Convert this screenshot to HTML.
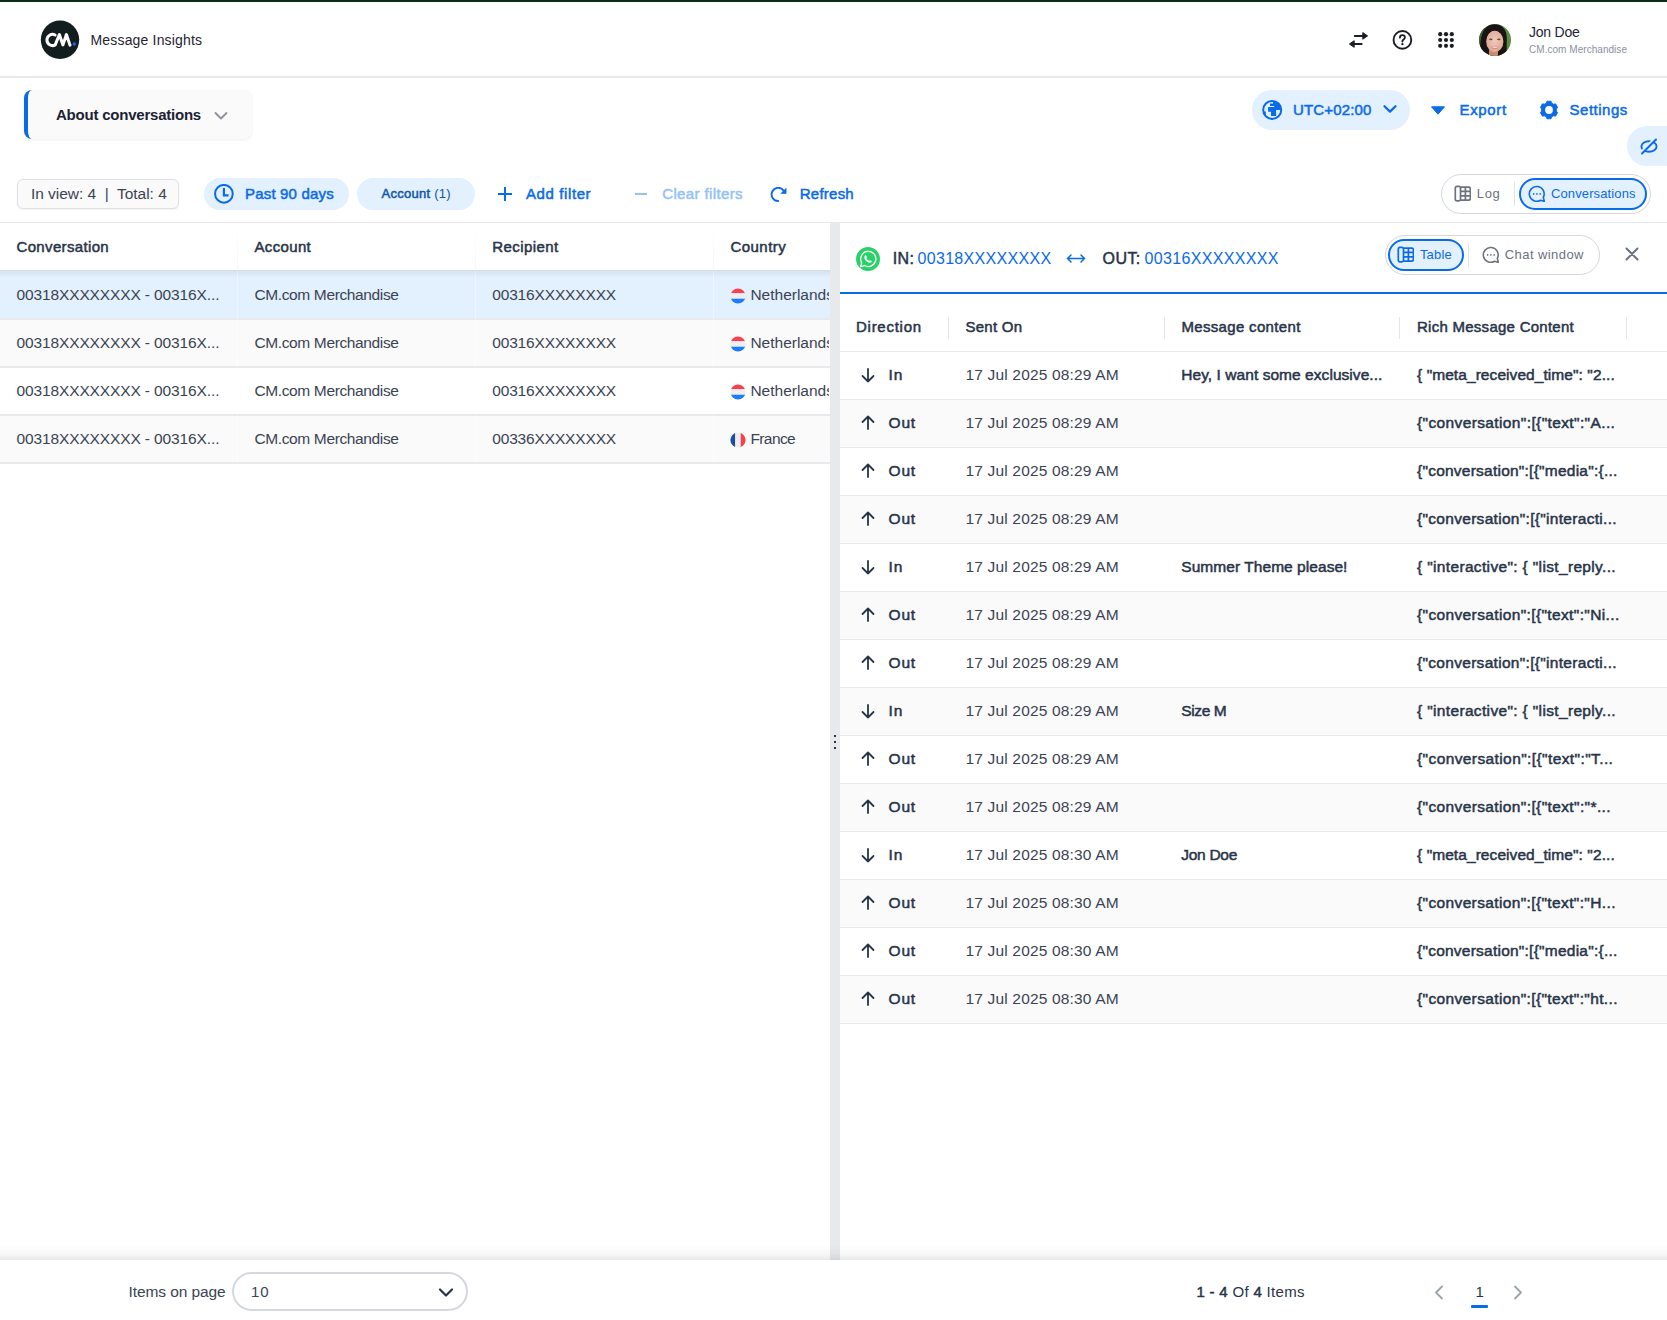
<!DOCTYPE html>
<html><head><meta charset="utf-8"><title>Message Insights</title>
<style>
html,body{margin:0;padding:0;}
body{width:1667px;height:1320px;position:relative;overflow:hidden;background:#fff;font-family:"Liberation Sans", sans-serif;}
.t{position:absolute;white-space:nowrap;}
.r{position:absolute;}
.sb{-webkit-text-stroke:0.5px currentColor;}
</style></head><body>
<div class="r" style="left:0px;top:0px;width:1667px;height:2px;background:#0b2e1b;"></div>
<svg class="r" style="left:40px;top:20px;" width="40" height="40" viewBox="0 0 40 40"><circle cx="20" cy="19.8" r="19.2" fill="#121e1e"/><path d="M15.1 15 A5.6 5.6 0 1 0 15.2 24.9 L19.4 14.6 L22.9 24.9 L26.4 14.6 L30 25.2" fill="none" stroke="#fff" stroke-width="3" stroke-linecap="round" stroke-linejoin="round"/><circle cx="34.3" cy="24" r="1.7" fill="#1f5cff"/></svg>
<div class="t " style="left:90.5px;top:31.45px;font-size:14px;line-height:18px;color:#1f2433;letter-spacing:0.173px;">Message Insights</div>
<svg class="r" style="left:1348px;top:31px;" width="21" height="18" viewBox="0 0 21 18"><path d="M6.8 4.9 H15.5" stroke="#1b1f24" stroke-width="2" fill="none" stroke-linecap="round"/><path d="M14.8 1.6 L19.6 4.9 L14.8 8.2 Z" fill="#1b1f24" stroke="#1b1f24" stroke-width="1" stroke-linejoin="round"/><path d="M13.6 13 H5.5" stroke="#1b1f24" stroke-width="2" fill="none" stroke-linecap="round"/><path d="M6.2 9.7 L1.4 13 L6.2 16.3 Z" fill="#1b1f24" stroke="#1b1f24" stroke-width="1" stroke-linejoin="round"/></svg>
<svg class="r" style="left:1391px;top:29px;" width="22" height="22" viewBox="0 0 22 22"><circle cx="11.4" cy="10.9" r="8.85" stroke="#1b1f24" stroke-width="1.9" fill="none"/><path d="M8.9 8.7 C8.9 7.2 10 6.2 11.4 6.2 C12.9 6.2 13.9 7.2 13.9 8.5 C13.9 10 12.3 10.4 11.6 11.5 L11.4 12.7" stroke="#1b1f24" stroke-width="1.8" fill="none" stroke-linecap="round"/><circle cx="11.4" cy="15.2" r="1.15" fill="#1b1f24"/></svg>
<svg class="r" style="left:1438px;top:32px;" width="16" height="16" viewBox="0 0 16 16"><circle cx="2.2" cy="2.2" r="2.1" fill="#1b1f24"/><circle cx="2.2" cy="8.0" r="2.1" fill="#1b1f24"/><circle cx="2.2" cy="13.8" r="2.1" fill="#1b1f24"/><circle cx="8.0" cy="2.2" r="2.1" fill="#1b1f24"/><circle cx="8.0" cy="8.0" r="2.1" fill="#1b1f24"/><circle cx="8.0" cy="13.8" r="2.1" fill="#1b1f24"/><circle cx="13.8" cy="2.2" r="2.1" fill="#1b1f24"/><circle cx="13.8" cy="8.0" r="2.1" fill="#1b1f24"/><circle cx="13.8" cy="13.8" r="2.1" fill="#1b1f24"/></svg>
<svg class="r" style="left:1479px;top:24px;" width="32" height="32" viewBox="0 0 32 32"><defs><clipPath id="av"><circle cx="16" cy="16" r="16"/></clipPath><radialGradient id="fg" cx="0.5" cy="0.45" r="0.6"><stop offset="0" stop-color="#f0c9bb"/><stop offset="1" stop-color="#dca58f"/></radialGradient></defs><g clip-path="url(#av)"><rect width="32" height="32" fill="#5d8a43"/><rect x="0" y="0" width="6" height="32" fill="#3f5f30"/><path d="M1.5 32 C0.5 18 2 0.2 15 0.2 C25.5 0.2 28.3 8 27.8 16 C27.4 24 28.5 30 26.5 32 Z" fill="#1a1315"/><rect x="10" y="25" width="9" height="8" fill="#c98b70"/><ellipse cx="15.8" cy="17.4" rx="8.6" ry="10.9" fill="url(#fg)"/><path d="M6.8 14.5 C7.2 6 12 4.6 15.6 4.8 C20.5 5 24.2 8 24.8 14.5 C23 8.8 18.5 6.4 15.6 6.4 C12.2 6.6 8.5 8.8 6.8 14.5Z" fill="#1a1315"/><ellipse cx="11.8" cy="15.3" rx="1.7" ry="0.85" fill="#6b4540"/><ellipse cx="19.8" cy="15.3" rx="1.7" ry="0.85" fill="#6b4540"/><ellipse cx="15.9" cy="23.5" rx="3.6" ry="1.6" fill="#d98d90"/><ellipse cx="15.9" cy="23.3" rx="2.6" ry="0.8" fill="#f4dcdc"/></g></svg>
<div class="t " style="left:1529px;top:23.45px;font-size:14px;line-height:18px;color:#1f2433;letter-spacing:-0.233px;">Jon Doe</div>
<div class="t " style="left:1529px;top:43.33px;font-size:10px;line-height:13px;color:#8a919e;letter-spacing:0.041px;">CM.com Merchandise</div>
<div class="r" style="left:0px;top:76px;width:1667px;height:2px;background:#e8e9ed;"></div>
<div class="r" style="left:24px;top:90px;width:228px;height:49px;background:#fafafa;border-radius:8px;box-shadow:0 1px 3px rgba(0,0,0,0.07);"></div>
<div class="r" style="left:24px;top:90px;width:10px;height:49px;border-left:4px solid #0a6be8;border-radius:8px 0 0 8px;box-sizing:border-box;"></div>
<div class="t " style="left:56px;top:105.10px;font-size:15px;line-height:20px;font-weight:700;color:#1b2233;letter-spacing:-0.222px;">About conversations</div>
<svg class="r" style="left:214px;top:111px;" width="14" height="10" viewBox="0 0 14 10"><path d="M1.5 2 L7 7.5 L12.5 2" stroke="#8a8f99" stroke-width="1.8" fill="none" stroke-linecap="round" stroke-linejoin="round"/></svg>
<div class="r" style="left:1252px;top:90px;width:158px;height:40px;background:#e3f0fd;border-radius:20px;"></div>
<svg class="r" style="left:1261px;top:99px;" width="22" height="22" viewBox="0 0 22 22"><defs><clipPath id="gl"><circle cx="11.2" cy="10.9" r="9"/></clipPath></defs><g clip-path="url(#gl)"><path d="M12 1 H22 V10.9 H15.1 V16.9 H10 V12.8 H7.1 V8 H13.2 V7 H9 V4.6 H12 Z" fill="#0a6be8"/><path d="M1 12.4 H4.8 V16 H1 Z" fill="#0a6be8"/></g><circle cx="11.2" cy="10.9" r="9" stroke="#0a6be8" stroke-width="2" fill="none"/></svg>
<div class="t " style="left:1292.9px;top:100.10px;font-size:15px;line-height:20px;-webkit-text-stroke:0.5px #0a6be8;color:#0a6be8;letter-spacing:0.162px;">UTC+02:00</div>
<svg class="r" style="left:1383px;top:104px;" width="14" height="10" viewBox="0 0 14 10"><path d="M1.5 2.2 L7 7.6 L12.5 2.2" stroke="#0a6be8" stroke-width="2.2" fill="none" stroke-linecap="round" stroke-linejoin="round"/></svg>
<svg class="r" style="left:1431px;top:106px;" width="14" height="9" viewBox="0 0 14 9"><path d="M0.5 0.8 H13.5 L7 8.2 Z" fill="#0a6be8" stroke="#0a6be8" stroke-width="1" stroke-linejoin="round"/></svg>
<div class="t " style="left:1459.5px;top:100.10px;font-size:15px;line-height:20px;-webkit-text-stroke:0.5px #0a6be8;color:#0a6be8;letter-spacing:0.660px;">Export</div>
<svg class="r" style="left:1539px;top:100px;" width="20" height="20" viewBox="0 0 20 20"><path d="M7.23,3.14 L7.98,1.23 L12.02,1.23 L12.77,3.14 L14.56,4.17 L16.58,3.86 L18.61,7.37 L17.33,8.97 L17.33,11.03 L18.61,12.63 L16.58,16.14 L14.56,15.83 L12.77,16.86 L12.02,18.77 L7.98,18.77 L7.23,16.86 L5.44,15.83 L3.42,16.14 L1.39,12.63 L2.67,11.03 L2.67,8.97 L1.39,7.37 L3.42,3.86 L5.44,4.17Z" fill="#0a6be8" stroke="#0a6be8" stroke-width="0.9" stroke-linejoin="round"/><circle cx="10" cy="10" r="3.9" fill="#fff"/></svg>
<div class="t " style="left:1569.6px;top:100.10px;font-size:15px;line-height:20px;-webkit-text-stroke:0.5px #0a6be8;color:#0a6be8;letter-spacing:0.500px;">Settings</div>
<div class="r" style="left:1627px;top:126px;width:60px;height:40px;background:#e3f0fd;border-radius:20px;"></div>
<svg class="r" style="left:1640px;top:138px;" width="18" height="17" viewBox="0 0 18 17"><ellipse cx="9" cy="8.5" rx="7.6" ry="5.2" stroke="#0a6be8" stroke-width="1.9" fill="none"/><path d="M0.9 14.4 L14.9 0.4" stroke="#e3f0fd" stroke-width="2.6" stroke-linecap="butt"/><path d="M2 15.5 L16 1.5" stroke="#0a6be8" stroke-width="2" stroke-linecap="round"/></svg>
<div class="r" style="left:17px;top:179px;width:162px;height:30px;background:#fafafa;border:1px solid #dfe1e6;border-radius:6px;box-sizing:border-box;box-shadow:0 1px 2px rgba(0,0,0,0.06);"></div>
<div class="t " style="left:30.9px;top:183.93px;font-size:15.5px;line-height:20px;color:#3a4354;letter-spacing:-0.023px;">In view: 4&nbsp; |&nbsp; Total: 4</div>
<div class="r" style="left:204px;top:178px;width:145px;height:32px;background:#e3f0fd;border-radius:16px;"></div>
<svg class="r" style="left:213px;top:184px;" width="22" height="22" viewBox="0 0 22 22"><circle cx="10.9" cy="9.8" r="8.85" stroke="#0a6be8" stroke-width="2" fill="none"/><path d="M10.9 4 V11.3 H15.6" stroke="#0a6be8" stroke-width="2.2" fill="none" stroke-linejoin="miter"/></svg>
<div class="t " style="left:245px;top:184.10px;font-size:15px;line-height:20px;-webkit-text-stroke:0.5px #0a6be8;color:#0a6be8;letter-spacing:0.182px;">Past 90 days</div>
<div class="r" style="left:357px;top:178px;width:118px;height:32px;background:#e3f0fd;border-radius:16px;"></div>
<div class="t " style="left:381.5px;top:185.30px;font-size:13px;line-height:17px;color:#0f57a8;letter-spacing:0.270px;"><span style="-webkit-text-stroke:0.5px #0f57a8">Account</span> (1)</div>
<svg class="r" style="left:498px;top:187px;" width="14" height="14" viewBox="0 0 14 14"><path d="M7 1 V13 M1 7 H13" stroke="#0a6be8" stroke-width="2" stroke-linecap="square"/></svg>
<div class="t " style="left:526px;top:184.10px;font-size:15px;line-height:20px;-webkit-text-stroke:0.5px #0a6be8;color:#0a6be8;letter-spacing:0.600px;">Add filter</div>
<svg class="r" style="left:634px;top:192px;" width="14" height="4" viewBox="0 0 14 4"><path d="M1 2 H13" stroke="#93c2f7" stroke-width="2"/></svg>
<div class="t " style="left:662.2px;top:184.10px;font-size:15px;line-height:20px;-webkit-text-stroke:0.5px #93c2f7;color:#93c2f7;letter-spacing:0.375px;">Clear filters</div>
<svg class="r" style="left:770px;top:187px;" width="18" height="16" viewBox="0 0 18 16"><path d="M8.2 14 A6.6 6.6 0 1 1 13.4 3.3" stroke="#0a6be8" stroke-width="1.9" fill="none" stroke-linecap="round"/><path d="M16.1 1.2 V6.5 H10.9 Z" fill="#0a6be8" stroke="#0a6be8" stroke-width="0.6" stroke-linejoin="round"/></svg>
<div class="t " style="left:799.8px;top:184.10px;font-size:15px;line-height:20px;-webkit-text-stroke:0.5px #0a6be8;color:#0a6be8;letter-spacing:0.233px;">Refresh</div>
<div class="r" style="left:1441px;top:174px;width:210px;height:40px;border:1px solid #d5d7dc;border-radius:20px;box-sizing:border-box;"></div>
<div class="r" style="left:1514px;top:182px;width:1px;height:24px;background:#e2e4e8;"></div>
<div class="r" style="left:1519px;top:178px;width:128px;height:32px;border:2px solid #0a6be8;background:#e3f0fd;border-radius:16px;box-sizing:border-box;"></div>
<svg class="r" style="left:1454px;top:185px;" width="17" height="17" viewBox="0 0 17 17"><rect x="1.3" y="1.3" width="5.2" height="14.6" rx="1.6" stroke="#6b7280" stroke-width="1.7" fill="none"/><path d="M6.5 2.1 H14.6 Q16.4 2.1 16.4 3.9 V13.3 Q16.4 15.1 14.6 15.1 H6.5 M6.5 6.4 H16.4 M6.5 10.8 H16.4 M11.4 2.1 V15.1" stroke="#6b7280" stroke-width="1.7" fill="none"/></svg>
<div class="t " style="left:1476.8px;top:185.30px;font-size:13px;line-height:17px;color:#6b7280;letter-spacing:0.600px;">Log</div>
<svg class="r" style="left:1528px;top:185px;" width="17" height="17" viewBox="0 0 17 17"><path d="M15.3 12.3 A7.4 7.4 0 1 0 12.6 15.2 L16.3 16.4 Z" stroke="#0a6be8" stroke-width="1.6" fill="none" stroke-linejoin="round"/><circle cx="5.6" cy="8.9" r="0.85" fill="#0a6be8"/><circle cx="8.9" cy="8.9" r="0.85" fill="#0a6be8"/><circle cx="12.2" cy="8.9" r="0.85" fill="#0a6be8"/></svg>
<div class="t " style="left:1551px;top:185.30px;font-size:13px;line-height:17px;color:#0a6be8;letter-spacing:0.117px;">Conversations</div>
<div class="r" style="left:0px;top:222px;width:1667px;height:1px;background:#e8e9ed;"></div>
<div class="r" style="left:0px;top:223px;width:830px;height:48px;background:#fff;"></div>
<div class="r" style="left:0px;top:271px;width:830px;height:48px;background:#e3f0fd;"></div>
<div class="r" style="left:0px;top:319px;width:830px;height:48px;background:#fafafa;"></div>
<div class="r" style="left:0px;top:367px;width:830px;height:48px;background:#fff;"></div>
<div class="r" style="left:0px;top:415px;width:830px;height:48px;background:#fafafa;"></div>
<div class="r" style="left:0px;top:318px;width:830px;height:2px;background:#e8e9ed;"></div>
<div class="r" style="left:0px;top:366px;width:830px;height:2px;background:#e8e9ed;"></div>
<div class="r" style="left:0px;top:414px;width:830px;height:2px;background:#e8e9ed;"></div>
<div class="r" style="left:0px;top:462px;width:830px;height:2px;background:#e8e9ed;"></div>
<div class="r" style="left:0px;top:270px;width:830px;height:1px;background:rgba(0,0,0,0.13);"></div>
<div class="r" style="left:0px;top:271px;width:830px;height:7px;background:linear-gradient(rgba(0,0,0,0.06),rgba(0,0,0,0));"></div>
<div class="r" style="left:237px;top:223px;width:1px;height:47px;background:linear-gradient(rgba(0,0,0,0),rgba(0,0,0,0.035));"></div>
<div class="r" style="left:237px;top:271px;width:1px;height:192px;background:rgba(255,255,255,0.35);"></div>
<div class="r" style="left:475px;top:223px;width:1px;height:47px;background:linear-gradient(rgba(0,0,0,0),rgba(0,0,0,0.035));"></div>
<div class="r" style="left:475px;top:271px;width:1px;height:192px;background:rgba(255,255,255,0.35);"></div>
<div class="r" style="left:713px;top:223px;width:1px;height:47px;background:linear-gradient(rgba(0,0,0,0),rgba(0,0,0,0.035));"></div>
<div class="r" style="left:713px;top:271px;width:1px;height:192px;background:rgba(255,255,255,0.35);"></div>
<div class="t " style="left:16.5px;top:237.10px;font-size:15px;line-height:20px;-webkit-text-stroke:0.5px #283449;color:#283449;letter-spacing:0.345px;">Conversation</div>
<div class="t " style="left:254.4px;top:237.10px;font-size:15px;line-height:20px;-webkit-text-stroke:0.5px #283449;color:#283449;letter-spacing:0.367px;">Account</div>
<div class="t " style="left:492.2px;top:237.10px;font-size:15px;line-height:20px;-webkit-text-stroke:0.5px #283449;color:#283449;letter-spacing:0.438px;">Recipient</div>
<div class="t " style="left:730.5px;top:237.10px;font-size:15px;line-height:20px;-webkit-text-stroke:0.5px #283449;color:#283449;letter-spacing:0.450px;">Country</div>
<div class="t " style="left:16.5px;top:284.93px;font-size:15.5px;line-height:20px;color:#3a4354;letter-spacing:-0.125px;">00318XXXXXXXX - 00316X...</div>
<div class="t " style="left:254.4px;top:284.93px;font-size:15.5px;line-height:20px;color:#3a4354;letter-spacing:-0.365px;">CM.com Merchandise</div>
<div class="t " style="left:492.2px;top:284.93px;font-size:15.5px;line-height:20px;color:#3a4354;letter-spacing:-0.150px;">00316XXXXXXXX</div>
<svg class="r" style="left:730px;top:288px;" width="16" height="16" viewBox="0 0 16 16"><defs><clipPath id="fl0"><circle cx="8" cy="8" r="7.6"/></clipPath></defs><g clip-path="url(#fl0)"><rect width="16" height="5.3" fill="#f9404f"/><rect y="5.3" width="16" height="5.4" fill="#eeeeee"/><rect y="10.7" width="16" height="5.3" fill="#1e7bff"/></g></svg>
<div class="t " style="left:750.4px;top:284.93px;font-size:15.5px;line-height:20px;color:#3a4354;width:79px;overflow:hidden;">Netherlands</div>
<div class="t " style="left:16.5px;top:332.93px;font-size:15.5px;line-height:20px;color:#3a4354;letter-spacing:-0.125px;">00318XXXXXXXX - 00316X...</div>
<div class="t " style="left:254.4px;top:332.93px;font-size:15.5px;line-height:20px;color:#3a4354;letter-spacing:-0.365px;">CM.com Merchandise</div>
<div class="t " style="left:492.2px;top:332.93px;font-size:15.5px;line-height:20px;color:#3a4354;letter-spacing:-0.150px;">00316XXXXXXXX</div>
<svg class="r" style="left:730px;top:336px;" width="16" height="16" viewBox="0 0 16 16"><defs><clipPath id="fl1"><circle cx="8" cy="8" r="7.6"/></clipPath></defs><g clip-path="url(#fl1)"><rect width="16" height="5.3" fill="#f9404f"/><rect y="5.3" width="16" height="5.4" fill="#eeeeee"/><rect y="10.7" width="16" height="5.3" fill="#1e7bff"/></g></svg>
<div class="t " style="left:750.4px;top:332.93px;font-size:15.5px;line-height:20px;color:#3a4354;width:79px;overflow:hidden;">Netherlands</div>
<div class="t " style="left:16.5px;top:380.93px;font-size:15.5px;line-height:20px;color:#3a4354;letter-spacing:-0.125px;">00318XXXXXXXX - 00316X...</div>
<div class="t " style="left:254.4px;top:380.93px;font-size:15.5px;line-height:20px;color:#3a4354;letter-spacing:-0.365px;">CM.com Merchandise</div>
<div class="t " style="left:492.2px;top:380.93px;font-size:15.5px;line-height:20px;color:#3a4354;letter-spacing:-0.150px;">00316XXXXXXXX</div>
<svg class="r" style="left:730px;top:384px;" width="16" height="16" viewBox="0 0 16 16"><defs><clipPath id="fl2"><circle cx="8" cy="8" r="7.6"/></clipPath></defs><g clip-path="url(#fl2)"><rect width="16" height="5.3" fill="#f9404f"/><rect y="5.3" width="16" height="5.4" fill="#eeeeee"/><rect y="10.7" width="16" height="5.3" fill="#1e7bff"/></g></svg>
<div class="t " style="left:750.4px;top:380.93px;font-size:15.5px;line-height:20px;color:#3a4354;width:79px;overflow:hidden;">Netherlands</div>
<div class="t " style="left:16.5px;top:428.93px;font-size:15.5px;line-height:20px;color:#3a4354;letter-spacing:-0.125px;">00318XXXXXXXX - 00316X...</div>
<div class="t " style="left:254.4px;top:428.93px;font-size:15.5px;line-height:20px;color:#3a4354;letter-spacing:-0.365px;">CM.com Merchandise</div>
<div class="t " style="left:492.2px;top:428.93px;font-size:15.5px;line-height:20px;color:#3a4354;letter-spacing:-0.150px;">00336XXXXXXXX</div>
<svg class="r" style="left:730px;top:432px;" width="16" height="16" viewBox="0 0 16 16"><defs><clipPath id="fl3"><circle cx="8" cy="8" r="7.6"/></clipPath></defs><g clip-path="url(#fl3)"><rect width="5.3" height="16" fill="#1d4fa0"/><rect x="5.3" width="5.4" height="16" fill="#eeeeee"/><rect x="10.7" width="5.3" height="16" fill="#f9404f"/></g></svg>
<div class="t " style="left:750.4px;top:428.93px;font-size:15.5px;line-height:20px;color:#3a4354;letter-spacing:-0.580px;">France</div>
<div class="r" style="left:830px;top:223px;width:10px;height:1037px;background:#e8e9ed;"></div>
<div class="r" style="left:833.5px;top:734.5px;width:2.5px;height:2.5px;background:#283449;"></div>
<div class="r" style="left:833.5px;top:740.5px;width:2.5px;height:2.5px;background:#283449;"></div>
<div class="r" style="left:833.5px;top:746.5px;width:2.5px;height:2.5px;background:#283449;"></div>
<svg class="r" style="left:856px;top:247px;" width="24" height="24" viewBox="0 0 24 24"><circle cx="12" cy="12" r="12" fill="#27d367"/><path d="M4.5 19.6 L5.7 15.7 A7.6 7.6 0 1 1 8.5 18.5 Z" fill="none" stroke="#fff" stroke-width="1.3" stroke-linejoin="round"/><g transform="translate(12.1 11.8) scale(1.12) translate(-12.3 -11.5)"><path d="M9.6 8.6 C9.9 8.2 10.4 8.3 10.6 8.7 L11.2 10 C11.3 10.3 11 10.6 10.8 10.9 C11.3 11.9 12.1 12.7 13.1 13.2 C13.4 13 13.7 12.7 14 12.8 L15.3 13.4 C15.7 13.6 15.8 14.1 15.4 14.4 C14.6 15.2 13.6 15.3 12.2 14.6 C10.8 13.9 9.8 12.8 9.2 11.5 C8.7 10.3 8.9 9.3 9.6 8.6 Z" fill="#fff"/></g></svg>
<div class="t " style="left:892.7px;top:248.26px;font-size:16px;line-height:21px;-webkit-text-stroke:0.5px #283449;color:#283449;letter-spacing:0.400px;">IN:</div>
<div class="t " style="left:917.5px;top:248.26px;font-size:16px;line-height:21px;color:#0a6be8;letter-spacing:0.317px;">00318XXXXXXXX</div>
<svg class="r" style="left:1066px;top:253px;" width="20" height="11" viewBox="0 0 20 11"><path d="M1.5 5.5 H18.5 M5 2 L1.5 5.5 L5 9 M15 2 L18.5 5.5 L15 9" stroke="#0a6be8" stroke-width="1.5" fill="none" stroke-linecap="round" stroke-linejoin="round"/></svg>
<div class="t " style="left:1102.6px;top:248.26px;font-size:16px;line-height:21px;-webkit-text-stroke:0.5px #283449;color:#283449;letter-spacing:0.400px;">OUT:</div>
<div class="t " style="left:1144.5px;top:248.26px;font-size:16px;line-height:21px;color:#0a6be8;letter-spacing:0.333px;">00316XXXXXXXX</div>
<div class="r" style="left:1385px;top:235px;width:215px;height:40px;border:1px solid #d5d7dc;border-radius:20px;box-sizing:border-box;"></div>
<div class="r" style="left:1468px;top:243px;width:1px;height:24px;background:#e2e4e8;"></div>
<div class="r" style="left:1388px;top:239px;width:76px;height:32px;border:2px solid #0a6be8;background:#e3f0fd;border-radius:16px;box-sizing:border-box;"></div>
<svg class="r" style="left:1397px;top:246px;" width="17" height="17" viewBox="0 0 17 17"><rect x="1.3" y="1.3" width="5.2" height="14.6" rx="1.6" stroke="#0a6be8" stroke-width="1.7" fill="none"/><path d="M6.5 2.1 H14.6 Q16.4 2.1 16.4 3.9 V13.3 Q16.4 15.1 14.6 15.1 H6.5 M6.5 6.4 H16.4 M6.5 10.8 H16.4 M11.4 2.1 V15.1" stroke="#0a6be8" stroke-width="1.7" fill="none"/></svg>
<div class="t " style="left:1419.9px;top:246.30px;font-size:13px;line-height:17px;color:#0a6be8;letter-spacing:0.200px;">Table</div>
<svg class="r" style="left:1482px;top:246px;" width="17" height="17" viewBox="0 0 17 17"><path d="M15.3 12.3 A7.4 7.4 0 1 0 12.6 15.2 L16.3 16.4 Z" stroke="#6b7280" stroke-width="1.6" fill="none" stroke-linejoin="round"/><circle cx="5.6" cy="8.9" r="0.85" fill="#6b7280"/><circle cx="8.9" cy="8.9" r="0.85" fill="#6b7280"/><circle cx="12.2" cy="8.9" r="0.85" fill="#6b7280"/></svg>
<div class="t " style="left:1504.8px;top:246.30px;font-size:13px;line-height:17px;color:#6b7280;letter-spacing:0.420px;">Chat window</div>
<svg class="r" style="left:1625px;top:247px;" width="14" height="14" viewBox="0 0 14 14"><path d="M1.5 1.5 L12.5 12.5 M12.5 1.5 L1.5 12.5" stroke="#6b7280" stroke-width="2" stroke-linecap="round"/></svg>
<div class="r" style="left:840px;top:292px;width:827px;height:2px;background:#0a6be8;"></div>
<div class="t " style="left:856px;top:317.10px;font-size:15px;line-height:20px;-webkit-text-stroke:0.5px #283449;color:#283449;letter-spacing:0.737px;">Direction</div>
<div class="t " style="left:965.4px;top:317.10px;font-size:15px;line-height:20px;-webkit-text-stroke:0.5px #283449;color:#283449;letter-spacing:0.267px;">Sent On</div>
<div class="t " style="left:1181.4px;top:317.10px;font-size:15px;line-height:20px;-webkit-text-stroke:0.5px #283449;color:#283449;letter-spacing:0.336px;">Message content</div>
<div class="t " style="left:1417px;top:317.10px;font-size:15px;line-height:20px;-webkit-text-stroke:0.5px #283449;color:#283449;letter-spacing:0.263px;">Rich Message Content</div>
<div class="r" style="left:948px;top:317px;width:1px;height:22px;background:#e5e7eb;"></div>
<div class="r" style="left:1164px;top:317px;width:1px;height:22px;background:#e5e7eb;"></div>
<div class="r" style="left:1399px;top:317px;width:1px;height:22px;background:#e5e7eb;"></div>
<div class="r" style="left:1626px;top:317px;width:1px;height:22px;background:#e5e7eb;"></div>
<div class="r" style="left:840px;top:351px;width:827px;height:1px;background:#e8e9ed;"></div>
<div class="r" style="left:840px;top:352px;width:827px;height:47px;background:#fff;"></div>
<div class="r" style="left:840px;top:399px;width:827px;height:1px;background:#e8e9ed;"></div>
<svg class="r" style="left:861px;top:367.6px;" width="14" height="15" viewBox="0 0 14 15"><path d="M7 1 V13.5 M1.5 8 L7 13.5 L12.5 8" stroke="#283449" stroke-width="1.8" fill="none" stroke-linecap="round" stroke-linejoin="round"/></svg>
<div class="t " style="left:888.6px;top:364.93px;font-size:15.5px;line-height:20px;-webkit-text-stroke:0.5px #283449;color:#283449;letter-spacing:0.800px;">In</div>
<div class="t " style="left:965.6px;top:364.93px;font-size:15.5px;line-height:20px;color:#3a4354;letter-spacing:0.158px;">17 Jul 2025 08:29 AM</div>
<div class="t " style="left:1181.3px;top:364.93px;font-size:15.5px;line-height:20px;-webkit-text-stroke:0.5px #283449;color:#283449;letter-spacing:0.054px;">Hey, I want some exclusive...</div>
<div class="t " style="left:1417px;top:364.93px;font-size:15.5px;line-height:20px;-webkit-text-stroke:0.5px #283449;color:#283449;letter-spacing:0.071px;">{ "meta_received_time": "2...</div>
<div class="r" style="left:840px;top:400px;width:827px;height:47px;background:#fafafa;"></div>
<div class="r" style="left:840px;top:447px;width:827px;height:1px;background:#e8e9ed;"></div>
<svg class="r" style="left:861px;top:415px;" width="14" height="15" viewBox="0 0 14 15"><path d="M7 14 V1.5 M1.5 7 L7 1.5 L12.5 7" stroke="#283449" stroke-width="1.8" fill="none" stroke-linecap="round" stroke-linejoin="round"/></svg>
<div class="t " style="left:888.6px;top:412.93px;font-size:15.5px;line-height:20px;-webkit-text-stroke:0.5px #283449;color:#283449;letter-spacing:0.750px;">Out</div>
<div class="t " style="left:965.6px;top:412.93px;font-size:15.5px;line-height:20px;color:#3a4354;letter-spacing:0.158px;">17 Jul 2025 08:29 AM</div>
<div class="t " style="left:1417px;top:412.93px;font-size:15.5px;line-height:20px;-webkit-text-stroke:0.5px #283449;color:#283449;letter-spacing:0.379px;">{"conversation":[{"text":"A...</div>
<div class="r" style="left:840px;top:448px;width:827px;height:47px;background:#fff;"></div>
<div class="r" style="left:840px;top:495px;width:827px;height:1px;background:#e8e9ed;"></div>
<svg class="r" style="left:861px;top:463px;" width="14" height="15" viewBox="0 0 14 15"><path d="M7 14 V1.5 M1.5 7 L7 1.5 L12.5 7" stroke="#283449" stroke-width="1.8" fill="none" stroke-linecap="round" stroke-linejoin="round"/></svg>
<div class="t " style="left:888.6px;top:460.93px;font-size:15.5px;line-height:20px;-webkit-text-stroke:0.5px #283449;color:#283449;letter-spacing:0.750px;">Out</div>
<div class="t " style="left:965.6px;top:460.93px;font-size:15.5px;line-height:20px;color:#3a4354;letter-spacing:0.158px;">17 Jul 2025 08:29 AM</div>
<div class="t " style="left:1417px;top:460.93px;font-size:15.5px;line-height:20px;-webkit-text-stroke:0.5px #283449;color:#283449;letter-spacing:0.234px;">{"conversation":[{"media":{...</div>
<div class="r" style="left:840px;top:496px;width:827px;height:47px;background:#fafafa;"></div>
<div class="r" style="left:840px;top:543px;width:827px;height:1px;background:#e8e9ed;"></div>
<svg class="r" style="left:861px;top:511px;" width="14" height="15" viewBox="0 0 14 15"><path d="M7 14 V1.5 M1.5 7 L7 1.5 L12.5 7" stroke="#283449" stroke-width="1.8" fill="none" stroke-linecap="round" stroke-linejoin="round"/></svg>
<div class="t " style="left:888.6px;top:508.93px;font-size:15.5px;line-height:20px;-webkit-text-stroke:0.5px #283449;color:#283449;letter-spacing:0.750px;">Out</div>
<div class="t " style="left:965.6px;top:508.93px;font-size:15.5px;line-height:20px;color:#3a4354;letter-spacing:0.158px;">17 Jul 2025 08:29 AM</div>
<div class="t " style="left:1417px;top:508.93px;font-size:15.5px;line-height:20px;-webkit-text-stroke:0.5px #283449;color:#283449;letter-spacing:0.300px;">{"conversation":[{"interacti...</div>
<div class="r" style="left:840px;top:544px;width:827px;height:47px;background:#fff;"></div>
<div class="r" style="left:840px;top:591px;width:827px;height:1px;background:#e8e9ed;"></div>
<svg class="r" style="left:861px;top:559.6px;" width="14" height="15" viewBox="0 0 14 15"><path d="M7 1 V13.5 M1.5 8 L7 13.5 L12.5 8" stroke="#283449" stroke-width="1.8" fill="none" stroke-linecap="round" stroke-linejoin="round"/></svg>
<div class="t " style="left:888.6px;top:556.93px;font-size:15.5px;line-height:20px;-webkit-text-stroke:0.5px #283449;color:#283449;letter-spacing:0.800px;">In</div>
<div class="t " style="left:965.6px;top:556.93px;font-size:15.5px;line-height:20px;color:#3a4354;letter-spacing:0.158px;">17 Jul 2025 08:29 AM</div>
<div class="t " style="left:1181.3px;top:556.93px;font-size:15.5px;line-height:20px;-webkit-text-stroke:0.5px #283449;color:#283449;letter-spacing:0.053px;">Summer Theme please!</div>
<div class="t " style="left:1417px;top:556.93px;font-size:15.5px;line-height:20px;-webkit-text-stroke:0.5px #283449;color:#283449;letter-spacing:0.344px;">{ "interactive": { "list_reply...</div>
<div class="r" style="left:840px;top:592px;width:827px;height:47px;background:#fafafa;"></div>
<div class="r" style="left:840px;top:639px;width:827px;height:1px;background:#e8e9ed;"></div>
<svg class="r" style="left:861px;top:607px;" width="14" height="15" viewBox="0 0 14 15"><path d="M7 14 V1.5 M1.5 7 L7 1.5 L12.5 7" stroke="#283449" stroke-width="1.8" fill="none" stroke-linecap="round" stroke-linejoin="round"/></svg>
<div class="t " style="left:888.6px;top:604.93px;font-size:15.5px;line-height:20px;-webkit-text-stroke:0.5px #283449;color:#283449;letter-spacing:0.750px;">Out</div>
<div class="t " style="left:965.6px;top:604.93px;font-size:15.5px;line-height:20px;color:#3a4354;letter-spacing:0.158px;">17 Jul 2025 08:29 AM</div>
<div class="t " style="left:1417px;top:604.93px;font-size:15.5px;line-height:20px;-webkit-text-stroke:0.5px #283449;color:#283449;letter-spacing:0.367px;">{"conversation":[{"text":"Ni...</div>
<div class="r" style="left:840px;top:640px;width:827px;height:47px;background:#fff;"></div>
<div class="r" style="left:840px;top:687px;width:827px;height:1px;background:#e8e9ed;"></div>
<svg class="r" style="left:861px;top:655px;" width="14" height="15" viewBox="0 0 14 15"><path d="M7 14 V1.5 M1.5 7 L7 1.5 L12.5 7" stroke="#283449" stroke-width="1.8" fill="none" stroke-linecap="round" stroke-linejoin="round"/></svg>
<div class="t " style="left:888.6px;top:652.93px;font-size:15.5px;line-height:20px;-webkit-text-stroke:0.5px #283449;color:#283449;letter-spacing:0.750px;">Out</div>
<div class="t " style="left:965.6px;top:652.93px;font-size:15.5px;line-height:20px;color:#3a4354;letter-spacing:0.158px;">17 Jul 2025 08:29 AM</div>
<div class="t " style="left:1417px;top:652.93px;font-size:15.5px;line-height:20px;-webkit-text-stroke:0.5px #283449;color:#283449;letter-spacing:0.300px;">{"conversation":[{"interacti...</div>
<div class="r" style="left:840px;top:688px;width:827px;height:47px;background:#fafafa;"></div>
<div class="r" style="left:840px;top:735px;width:827px;height:1px;background:#e8e9ed;"></div>
<svg class="r" style="left:861px;top:703.6px;" width="14" height="15" viewBox="0 0 14 15"><path d="M7 1 V13.5 M1.5 8 L7 13.5 L12.5 8" stroke="#283449" stroke-width="1.8" fill="none" stroke-linecap="round" stroke-linejoin="round"/></svg>
<div class="t " style="left:888.6px;top:700.93px;font-size:15.5px;line-height:20px;-webkit-text-stroke:0.5px #283449;color:#283449;letter-spacing:0.800px;">In</div>
<div class="t " style="left:965.6px;top:700.93px;font-size:15.5px;line-height:20px;color:#3a4354;letter-spacing:0.158px;">17 Jul 2025 08:29 AM</div>
<div class="t " style="left:1181.3px;top:700.93px;font-size:15.5px;line-height:20px;-webkit-text-stroke:0.5px #283449;color:#283449;letter-spacing:-0.400px;">Size M</div>
<div class="t " style="left:1417px;top:700.93px;font-size:15.5px;line-height:20px;-webkit-text-stroke:0.5px #283449;color:#283449;letter-spacing:0.344px;">{ "interactive": { "list_reply...</div>
<div class="r" style="left:840px;top:736px;width:827px;height:47px;background:#fff;"></div>
<div class="r" style="left:840px;top:783px;width:827px;height:1px;background:#e8e9ed;"></div>
<svg class="r" style="left:861px;top:751px;" width="14" height="15" viewBox="0 0 14 15"><path d="M7 14 V1.5 M1.5 7 L7 1.5 L12.5 7" stroke="#283449" stroke-width="1.8" fill="none" stroke-linecap="round" stroke-linejoin="round"/></svg>
<div class="t " style="left:888.6px;top:748.93px;font-size:15.5px;line-height:20px;-webkit-text-stroke:0.5px #283449;color:#283449;letter-spacing:0.750px;">Out</div>
<div class="t " style="left:965.6px;top:748.93px;font-size:15.5px;line-height:20px;color:#3a4354;letter-spacing:0.158px;">17 Jul 2025 08:29 AM</div>
<div class="t " style="left:1417px;top:748.93px;font-size:15.5px;line-height:20px;-webkit-text-stroke:0.5px #283449;color:#283449;letter-spacing:0.400px;">{"conversation":[{"text":"T...</div>
<div class="r" style="left:840px;top:784px;width:827px;height:47px;background:#fafafa;"></div>
<div class="r" style="left:840px;top:831px;width:827px;height:1px;background:#e8e9ed;"></div>
<svg class="r" style="left:861px;top:799px;" width="14" height="15" viewBox="0 0 14 15"><path d="M7 14 V1.5 M1.5 7 L7 1.5 L12.5 7" stroke="#283449" stroke-width="1.8" fill="none" stroke-linecap="round" stroke-linejoin="round"/></svg>
<div class="t " style="left:888.6px;top:796.93px;font-size:15.5px;line-height:20px;-webkit-text-stroke:0.5px #283449;color:#283449;letter-spacing:0.750px;">Out</div>
<div class="t " style="left:965.6px;top:796.93px;font-size:15.5px;line-height:20px;color:#3a4354;letter-spacing:0.158px;">17 Jul 2025 08:29 AM</div>
<div class="t " style="left:1417px;top:796.93px;font-size:15.5px;line-height:20px;-webkit-text-stroke:0.5px #283449;color:#283449;letter-spacing:0.379px;">{"conversation":[{"text":"*...</div>
<div class="r" style="left:840px;top:832px;width:827px;height:47px;background:#fff;"></div>
<div class="r" style="left:840px;top:879px;width:827px;height:1px;background:#e8e9ed;"></div>
<svg class="r" style="left:861px;top:847.6px;" width="14" height="15" viewBox="0 0 14 15"><path d="M7 1 V13.5 M1.5 8 L7 13.5 L12.5 8" stroke="#283449" stroke-width="1.8" fill="none" stroke-linecap="round" stroke-linejoin="round"/></svg>
<div class="t " style="left:888.6px;top:844.93px;font-size:15.5px;line-height:20px;-webkit-text-stroke:0.5px #283449;color:#283449;letter-spacing:0.800px;">In</div>
<div class="t " style="left:965.6px;top:844.93px;font-size:15.5px;line-height:20px;color:#3a4354;letter-spacing:0.158px;">17 Jul 2025 08:30 AM</div>
<div class="t " style="left:1181.3px;top:844.93px;font-size:15.5px;line-height:20px;-webkit-text-stroke:0.5px #283449;color:#283449;letter-spacing:-0.283px;">Jon Doe</div>
<div class="t " style="left:1417px;top:844.93px;font-size:15.5px;line-height:20px;-webkit-text-stroke:0.5px #283449;color:#283449;letter-spacing:0.071px;">{ "meta_received_time": "2...</div>
<div class="r" style="left:840px;top:880px;width:827px;height:47px;background:#fafafa;"></div>
<div class="r" style="left:840px;top:927px;width:827px;height:1px;background:#e8e9ed;"></div>
<svg class="r" style="left:861px;top:895px;" width="14" height="15" viewBox="0 0 14 15"><path d="M7 14 V1.5 M1.5 7 L7 1.5 L12.5 7" stroke="#283449" stroke-width="1.8" fill="none" stroke-linecap="round" stroke-linejoin="round"/></svg>
<div class="t " style="left:888.6px;top:892.93px;font-size:15.5px;line-height:20px;-webkit-text-stroke:0.5px #283449;color:#283449;letter-spacing:0.750px;">Out</div>
<div class="t " style="left:965.6px;top:892.93px;font-size:15.5px;line-height:20px;color:#3a4354;letter-spacing:0.158px;">17 Jul 2025 08:30 AM</div>
<div class="t " style="left:1417px;top:892.93px;font-size:15.5px;line-height:20px;-webkit-text-stroke:0.5px #283449;color:#283449;letter-spacing:0.369px;">{"conversation":[{"text":"H...</div>
<div class="r" style="left:840px;top:928px;width:827px;height:47px;background:#fff;"></div>
<div class="r" style="left:840px;top:975px;width:827px;height:1px;background:#e8e9ed;"></div>
<svg class="r" style="left:861px;top:943px;" width="14" height="15" viewBox="0 0 14 15"><path d="M7 14 V1.5 M1.5 7 L7 1.5 L12.5 7" stroke="#283449" stroke-width="1.8" fill="none" stroke-linecap="round" stroke-linejoin="round"/></svg>
<div class="t " style="left:888.6px;top:940.93px;font-size:15.5px;line-height:20px;-webkit-text-stroke:0.5px #283449;color:#283449;letter-spacing:0.750px;">Out</div>
<div class="t " style="left:965.6px;top:940.93px;font-size:15.5px;line-height:20px;color:#3a4354;letter-spacing:0.158px;">17 Jul 2025 08:30 AM</div>
<div class="t " style="left:1417px;top:940.93px;font-size:15.5px;line-height:20px;-webkit-text-stroke:0.5px #283449;color:#283449;letter-spacing:0.234px;">{"conversation":[{"media":{...</div>
<div class="r" style="left:840px;top:976px;width:827px;height:47px;background:#fafafa;"></div>
<div class="r" style="left:840px;top:1023px;width:827px;height:1px;background:#e8e9ed;"></div>
<svg class="r" style="left:861px;top:991px;" width="14" height="15" viewBox="0 0 14 15"><path d="M7 14 V1.5 M1.5 7 L7 1.5 L12.5 7" stroke="#283449" stroke-width="1.8" fill="none" stroke-linecap="round" stroke-linejoin="round"/></svg>
<div class="t " style="left:888.6px;top:988.93px;font-size:15.5px;line-height:20px;-webkit-text-stroke:0.5px #283449;color:#283449;letter-spacing:0.750px;">Out</div>
<div class="t " style="left:965.6px;top:988.93px;font-size:15.5px;line-height:20px;color:#3a4354;letter-spacing:0.158px;">17 Jul 2025 08:30 AM</div>
<div class="t " style="left:1417px;top:988.93px;font-size:15.5px;line-height:20px;-webkit-text-stroke:0.5px #283449;color:#283449;letter-spacing:0.367px;">{"conversation":[{"text":"ht...</div>
<div class="r" style="left:0px;top:1244px;width:1667px;height:16px;background:linear-gradient(rgba(0,0,0,0) 0%,rgba(0,0,0,0.012) 30%,rgba(0,0,0,0.035) 65%,rgba(0,0,0,0.085) 100%);"></div>
<div class="r" style="left:0px;top:1260px;width:1667px;height:60px;background:#fff;"></div>
<div class="t " style="left:128.5px;top:1281.93px;font-size:15.5px;line-height:20px;color:#3a4354;letter-spacing:-0.083px;">Items on page</div>
<div class="r" style="left:232px;top:1272px;width:236px;height:39px;border:2px solid #d5d8de;border-radius:19.5px;box-sizing:border-box;"></div>
<div class="t " style="left:250.9px;top:1282.10px;font-size:15px;line-height:20px;color:#3a4354;letter-spacing:1.000px;">10</div>
<svg class="r" style="left:438px;top:1287px;" width="16" height="11" viewBox="0 0 16 11"><path d="M2 2.5 L8 8.5 L14 2.5" stroke="#283449" stroke-width="2.2" fill="none" stroke-linecap="round" stroke-linejoin="round"/></svg>
<div class="t " style="left:1196.4px;top:1282.10px;font-size:15px;line-height:20px;color:#283449;letter-spacing:0.313px;"><span class="sb">1 - 4</span> Of <span class="sb">4</span> Items</div>
<svg class="r" style="left:1433px;top:1285px;" width="12" height="15" viewBox="0 0 12 15"><path d="M9 1.5 L3 7.5 L9 13.5" stroke="#9ca3af" stroke-width="1.8" fill="none" stroke-linecap="round" stroke-linejoin="round"/></svg>
<div class="t " style="left:1475.5px;top:1282.10px;font-size:15px;line-height:20px;color:#283449;">1</div>
<div class="r" style="left:1471px;top:1305px;width:17px;height:3px;background:#0a6be8;border-radius:1px;"></div>
<svg class="r" style="left:1512px;top:1285px;" width="12" height="15" viewBox="0 0 12 15"><path d="M3 1.5 L9 7.5 L3 13.5" stroke="#9ca3af" stroke-width="1.8" fill="none" stroke-linecap="round" stroke-linejoin="round"/></svg>
</body></html>
